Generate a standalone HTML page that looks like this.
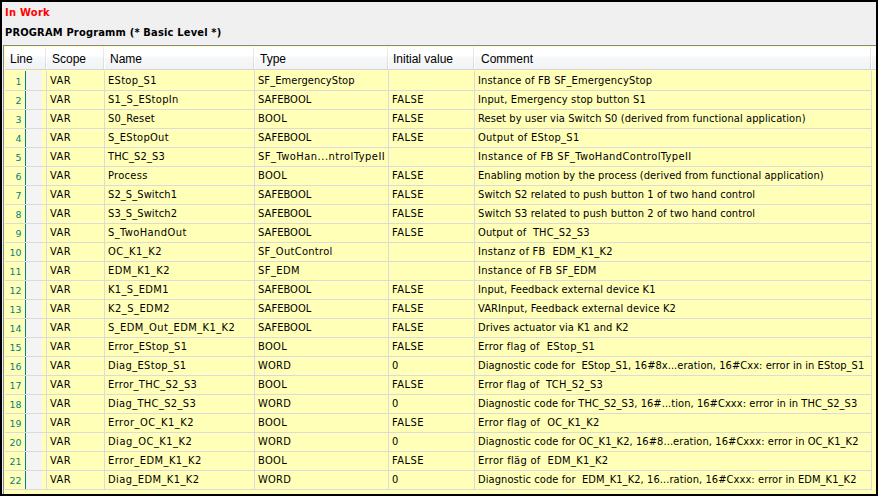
<!DOCTYPE html><html><head><meta charset="utf-8"><title>In Work</title><style>
html,body{margin:0;padding:0}
body{width:878px;height:496px;background:#000;position:relative;overflow:hidden;font-family:"DejaVu Sans Condensed","Liberation Sans",sans-serif;font-size:11px;color:#000}
#win{position:absolute;left:2px;top:2px;width:874px;height:492px;background:#f0f0f0}
.t{position:absolute;white-space:pre;line-height:13px;height:13px;margin:0;font-size:11px;font-weight:bold}
#t1{left:5px;top:6px;color:#f00;letter-spacing:0.28px}
#t2{left:5px;top:26px;letter-spacing:0.18px}
#list{position:absolute;left:3px;top:45px;width:873px;height:449px;background:#ffffb8;border-left:1px solid #828790;border-top:1px solid #828790;box-sizing:border-box}
#hdr{position:absolute;left:5px;top:47px;width:871px;height:22px;background:linear-gradient(#fff 0,#fff 9px,#f7f8fa 10px,#f1f2f4 22px);border-bottom:1px solid #d5d5d5}
.hs{position:absolute;top:0;width:1px;height:22px;background:linear-gradient(#f0f0f0,#d6d7d9)}
.hs:after{content:"";position:absolute;left:1px;top:0;width:1px;height:22px;background:#fff}
.ht{position:absolute;top:5px;white-space:pre;font-family:"Liberation Sans",sans-serif;font-size:12px;line-height:15px;height:15px;color:#000}
#body{position:absolute;left:5px;top:71px;width:871px;height:423px}
.row{position:absolute;left:0;width:867px;height:19px;border-bottom:1px solid #dbdbdb}
.vl{position:absolute;top:0;width:1px;height:419px;background:#dbdbdb}
#teal{position:absolute;left:20px;top:0;width:1px;height:418px;background:#008080}
#gut{position:absolute;left:21px;top:0;width:16px;height:419px;background:#f4f4f4}
.c{position:absolute;top:3px;white-space:pre;line-height:13px;height:13px;letter-spacing:0.06px}
.scope{left:45px;letter-spacing:0.4px}
.name{left:103px}
.type{left:253px}
.init{left:387px}
.com{left:473px}
.n{position:absolute;left:0;top:4px;width:16.5px;text-align:right;font-size:10.4px;line-height:12px;height:12px;color:#008080;white-space:pre;transform:scaleY(0.9);transform-origin:0 10px}
</style></head><body>
<div id="win"></div>
<div class="t" id="t1">In Work</div>
<div class="t" id="t2">PROGRAM Programm (* Basic Level *)</div>
<div id="list"></div>
<div id="hdr">
<div class="hs" style="left:40px"></div>
<div class="hs" style="left:98px"></div>
<div class="hs" style="left:248px"></div>
<div class="hs" style="left:382px"></div>
<div class="hs" style="left:468px"></div>
<div class="hs" style="left:865px"></div>
<div class="ht" style="left:5px">Line</div>
<div class="ht" style="left:47px">Scope</div>
<div class="ht" style="left:105px">Name</div>
<div class="ht" style="left:255px">Type</div>
<div class="ht" style="left:388px">Initial value</div>
<div class="ht" style="left:476px">Comment</div>
</div>
<div id="body">
<div id="gut"></div>
<div id="teal"></div>
<div class="vl" style="left:41px"></div>
<div class="vl" style="left:99px"></div>
<div class="vl" style="left:249px"></div>
<div class="vl" style="left:383px"></div>
<div class="vl" style="left:469px"></div>
<div class="vl" style="left:866px"></div>
<div class="row" style="top:0px">
<div class="n">1</div>
<div class="c scope">VAR</div>
<div class="c name" style="letter-spacing:0.317px;">EStop_S1</div>
<div class="c type" style="letter-spacing:0.087px;">SF_EmergencyStop</div>
<div class="c com" style="letter-spacing:0.173px;">Instance of FB SF_EmergencyStop</div>
</div>
<div class="row" style="top:19px">
<div class="n">2</div>
<div class="c scope">VAR</div>
<div class="c name" style="letter-spacing:0.333px;">S1_S_EStopIn</div>
<div class="c type" style="letter-spacing:0.060px;">SAFEBOOL</div>
<div class="c init" style="letter-spacing:0.485px;">FALSE</div>
<div class="c com" style="letter-spacing:0.133px;">Input, Emergency stop button S1</div>
</div>
<div class="row" style="top:38px">
<div class="n">3</div>
<div class="c scope">VAR</div>
<div class="c name" style="letter-spacing:0.217px;">S0_Reset</div>
<div class="c type" style="letter-spacing:0.360px;">BOOL</div>
<div class="c init" style="letter-spacing:0.485px;">FALSE</div>
<div class="c com" style="letter-spacing:0.093px;">Reset by user via Switch S0 (derived from functional application)</div>
</div>
<div class="row" style="top:57px">
<div class="n">4</div>
<div class="c scope">VAR</div>
<div class="c name" style="letter-spacing:0.293px;">S_EStopOut</div>
<div class="c type" style="letter-spacing:0.060px;">SAFEBOOL</div>
<div class="c init" style="letter-spacing:0.485px;">FALSE</div>
<div class="c com" style="letter-spacing:0.278px;">Output of EStop_S1</div>
</div>
<div class="row" style="top:76px">
<div class="n">5</div>
<div class="c scope">VAR</div>
<div class="c name" style="letter-spacing:0.160px;">THC_S2_S3</div>
<div class="c type" style="letter-spacing:0.505px;">SF_TwoHan...ntrolTypeII</div>
<div class="c com" style="letter-spacing:0.382px;">Instance of FB SF_TwoHandControlTypeII</div>
</div>
<div class="row" style="top:95px">
<div class="n">6</div>
<div class="c scope">VAR</div>
<div class="c name" style="letter-spacing:0.310px;">Process</div>
<div class="c type" style="letter-spacing:0.360px;">BOOL</div>
<div class="c init" style="letter-spacing:0.485px;">FALSE</div>
<div class="c com" style="letter-spacing:0.069px;">Enabling motion by the process (derived from functional application)</div>
</div>
<div class="row" style="top:114px">
<div class="n">7</div>
<div class="c scope">VAR</div>
<div class="c name" style="letter-spacing:0.105px;">S2_S_Switch1</div>
<div class="c type" style="letter-spacing:0.060px;">SAFEBOOL</div>
<div class="c init" style="letter-spacing:0.485px;">FALSE</div>
<div class="c com" style="letter-spacing:0.109px;">Switch S2 related to push button 1 of two hand control</div>
</div>
<div class="row" style="top:133px">
<div class="n">8</div>
<div class="c scope">VAR</div>
<div class="c name" style="letter-spacing:0.105px;">S3_S_Switch2</div>
<div class="c type" style="letter-spacing:0.060px;">SAFEBOOL</div>
<div class="c init" style="letter-spacing:0.485px;">FALSE</div>
<div class="c com" style="letter-spacing:0.109px;">Switch S3 related to push button 2 of two hand control</div>
</div>
<div class="row" style="top:152px">
<div class="n">9</div>
<div class="c scope">VAR</div>
<div class="c name" style="letter-spacing:0.424px;">S_TwoHandOut</div>
<div class="c type" style="letter-spacing:0.060px;">SAFEBOOL</div>
<div class="c init" style="letter-spacing:0.485px;">FALSE</div>
<div class="c com" style="letter-spacing:0.144px;">Output of  THC_S2_S3</div>
</div>
<div class="row" style="top:171px">
<div class="n">10</div>
<div class="c scope">VAR</div>
<div class="c name" style="letter-spacing:0.474px;">OC_K1_K2</div>
<div class="c type" style="letter-spacing:0.302px;">SF_OutControl</div>
<div class="c com" style="letter-spacing:0.273px;">Instanz of FB  EDM_K1_K2</div>
</div>
<div class="row" style="top:190px">
<div class="n">11</div>
<div class="c scope">VAR</div>
<div class="c name" style="letter-spacing:0.448px;">EDM_K1_K2</div>
<div class="c type" style="letter-spacing:0.460px;">SF_EDM</div>
<div class="c com" style="letter-spacing:0.275px;">Instance of FB SF_EDM</div>
</div>
<div class="row" style="top:209px">
<div class="n">12</div>
<div class="c scope">VAR</div>
<div class="c name" style="letter-spacing:0.360px;">K1_S_EDM1</div>
<div class="c type" style="letter-spacing:0.060px;">SAFEBOOL</div>
<div class="c init" style="letter-spacing:0.485px;">FALSE</div>
<div class="c com" style="letter-spacing:0.093px;">Input, Feedback external device K1</div>
</div>
<div class="row" style="top:228px">
<div class="n">13</div>
<div class="c scope">VAR</div>
<div class="c name" style="letter-spacing:0.485px;">K2_S_EDM2</div>
<div class="c type" style="letter-spacing:0.060px;">SAFEBOOL</div>
<div class="c init" style="letter-spacing:0.485px;">FALSE</div>
<div class="c com" style="letter-spacing:0.104px;">VARInput, Feedback external device K2</div>
</div>
<div class="row" style="top:247px">
<div class="n">14</div>
<div class="c scope">VAR</div>
<div class="c name" style="letter-spacing:0.410px;">S_EDM_Out_EDM_K1_K2</div>
<div class="c type" style="letter-spacing:0.060px;">SAFEBOOL</div>
<div class="c init" style="letter-spacing:0.485px;">FALSE</div>
<div class="c com" style="letter-spacing:0.096px;">Drives actuator via K1 and K2</div>
</div>
<div class="row" style="top:266px">
<div class="n">15</div>
<div class="c scope">VAR</div>
<div class="c name" style="letter-spacing:0.283px;">Error_EStop_S1</div>
<div class="c type" style="letter-spacing:0.360px;">BOOL</div>
<div class="c init" style="letter-spacing:0.485px;">FALSE</div>
<div class="c com" style="letter-spacing:0.260px;">Error flag of  EStop_S1</div>
</div>
<div class="row" style="top:285px">
<div class="n">16</div>
<div class="c scope">VAR</div>
<div class="c name" style="letter-spacing:0.352px;">Diag_EStop_S1</div>
<div class="c type" style="letter-spacing:0.227px;">WORD</div>
<div class="c init" style="letter-spacing:-0.240px;">0</div>
<div class="c com" style="letter-spacing:0.051px;">Diagnostic code for  EStop_S1, 16#8x...eration, 16#Cxx: error in in EStop_S1</div>
</div>
<div class="row" style="top:304px">
<div class="n">17</div>
<div class="c scope">VAR</div>
<div class="c name" style="letter-spacing:0.310px;">Error_THC_S2_S3</div>
<div class="c type" style="letter-spacing:0.360px;">BOOL</div>
<div class="c init" style="letter-spacing:0.485px;">FALSE</div>
<div class="c com" style="letter-spacing:0.225px;">Error flag of  TCH_S2_S3</div>
</div>
<div class="row" style="top:323px">
<div class="n">18</div>
<div class="c scope">VAR</div>
<div class="c name" style="letter-spacing:0.352px;">Diag_THC_S2_S3</div>
<div class="c type" style="letter-spacing:0.227px;">WORD</div>
<div class="c init" style="letter-spacing:-0.240px;">0</div>
<div class="c com" style="letter-spacing:0.057px;">Diagnostic code for THC_S2_S3, 16#...tion, 16#Cxxx: error in in THC_S2_S3</div>
</div>
<div class="row" style="top:342px">
<div class="n">19</div>
<div class="c scope">VAR</div>
<div class="c name" style="letter-spacing:0.491px;">Error_OC_K1_K2</div>
<div class="c type" style="letter-spacing:0.360px;">BOOL</div>
<div class="c init" style="letter-spacing:0.485px;">FALSE</div>
<div class="c com" style="letter-spacing:0.292px;">Error flag of  OC_K1_K2</div>
</div>
<div class="row" style="top:361px">
<div class="n">20</div>
<div class="c scope">VAR</div>
<div class="c name" style="letter-spacing:0.502px;">Diag_OC_K1_K2</div>
<div class="c type" style="letter-spacing:0.227px;">WORD</div>
<div class="c init" style="letter-spacing:-0.240px;">0</div>
<div class="c com" style="letter-spacing:0.078px;">Diagnostic code for OC_K1_K2, 16#8...eration, 16#Cxxx: error in OC_K1_K2</div>
</div>
<div class="row" style="top:380px">
<div class="n">21</div>
<div class="c scope">VAR</div>
<div class="c name" style="letter-spacing:0.453px;">Error_EDM_K1_K2</div>
<div class="c type" style="letter-spacing:0.360px;">BOOL</div>
<div class="c init" style="letter-spacing:0.485px;">FALSE</div>
<div class="c com" style="letter-spacing:0.321px;">Error fläg of  EDM_K1_K2</div>
</div>
<div class="row" style="top:399px">
<div class="n">22</div>
<div class="c scope">VAR</div>
<div class="c name" style="letter-spacing:0.422px;">Diag_EDM_K1_K2</div>
<div class="c type" style="letter-spacing:0.227px;">WORD</div>
<div class="c init" style="letter-spacing:-0.240px;">0</div>
<div class="c com" style="letter-spacing:0.080px;">Diagnostic code for  EDM_K1_K2, 16...ration, 16#Cxxx: error in EDM_K1_K2</div>
</div>
</div>
</body></html>
